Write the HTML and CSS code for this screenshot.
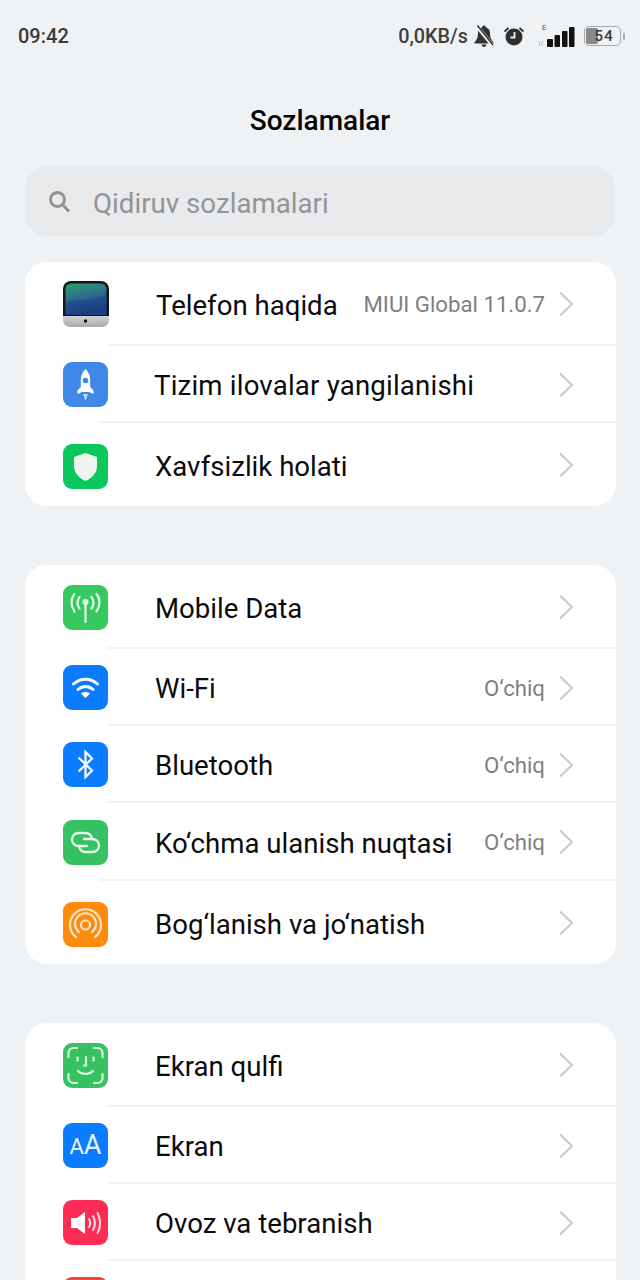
FILE: index.html
```html
<!DOCTYPE html>
<html lang="uz">
<head>
<meta charset="utf-8">
<title>Sozlamalar</title>
<link rel="stylesheet" href="styles.css">
</head>
<body>
<div class="screen">
  <div class="status">
    <span class="time">09:42</span>
    <div class="status-right">
      <span class="speed">0,0KB/s</span>
      <svg class="st-bell" width="22" height="24" viewBox="0 0 22 24"><path d="M11 1.500c1.200 0 1.800.8 1.800 1.800 3 .9 4.200 3.400 4.200 6 0 4 1.200 7 3.500 8.700v1.500h-19V18C3.800 16.300 5 13.300 5 9.300c0-2.600 1.200-5.100 4.200-6C9.200 2.300 9.800 1.500 11 1.500zM8.500 20.500h5c0 1.500-1.200 2.500-2.500 2.500s-2.500-1-2.500-2.500z" fill="#333"/><path d="M3 1 20 22" stroke="#eff2f5" stroke-width="3.600"/><path d="M4.500 1.500 20 21" stroke="#333" stroke-width="1.500"/></svg>
      <svg class="st-alarm" width="22" height="22" viewBox="0 0 22 22"><circle cx="11" cy="12" r="8.500" fill="#2f2f2f"/><path d="M11.500 7V12.500H7.500" fill="none" stroke="#eff2f5" stroke-width="1.800"/><path d="M1.500 6.500 5.500 3M20.500 6.500 16.500 3" stroke="#2f2f2f" stroke-width="1.800"/></svg>
      <svg class="st-signal" width="38" height="26" viewBox="0 0 38 26"><text x="4" y="7.500" class="st-e">E</text><path d="M1 24 2 19M3.500 24l1-5" stroke="#b5b5b5" stroke-width=".9"/><rect x="9" y="17" width="6" height="8" rx="1" fill="#111"/><rect x="16.500" y="13" width="5.500" height="12" rx="1" fill="#111"/><rect x="24" y="9" width="5.500" height="16" rx="1" fill="#111"/><rect x="31" y="5" width="5.500" height="20" rx="1" fill="#111"/></svg>
      <div class="battery">
        <div class="battery-fill"></div>
        <span class="battery-num">54</span>
      </div>
      <span class="battery-tip"></span>
    </div>
  </div>

  <h1 class="title">Sozlamalar</h1>

  <div class="search">
    <svg width="26" height="26" viewBox="0 0 26 26"><circle cx="11.500" cy="11.500" r="7" fill="none" stroke="#8f9193" stroke-width="2.800"/><path d="M16.500 16.500 23 23.500" stroke="#8f9193" stroke-width="3"/></svg>
    <span class="search-text">Qidiruv sozlamalari</span>
  </div>

  <section class="card card-a">
    <div class="row row-first">
      <svg class="ico-mac" width="46" height="46" viewBox="0 0 46 46">
        <defs>
          <linearGradient id="scr" x1="0" y1="0" x2="0.300" y2="1"><stop offset="0" stop-color="#2f9a72"/><stop offset=".4" stop-color="#2b7a85"/><stop offset=".7" stop-color="#2a5596"/><stop offset="1" stop-color="#1a3a78"/></linearGradient>
          <linearGradient id="chin" x1="0" y1="0" x2="0" y2="1"><stop offset="0" stop-color="#dcdcdc"/><stop offset="1" stop-color="#a8a8a8"/></linearGradient>
        </defs>
        <path d="M0 33h46v6a7 7 0 0 1-7 7H7a7 7 0 0 1-7-7z" fill="url(#chin)"/>
        <path d="M8 0h30a8 8 0 0 1 8 8v27H0V8a8 8 0 0 1 8-8z" fill="#14181a"/>
        <path d="M8 2.500h30a5.500 5.500 0 0 1 5.500 5.500v26h-41V8A5.500 5.500 0 0 1 8 2.500z" fill="url(#scr)"/>
        <path d="M2.500 22C14 17 30 21 43.500 13V34h-41z" fill="#1b3f86" opacity=".5"/>
        <circle cx="22.500" cy="40" r="1.700" fill="#111"/>
      </svg>
      <span class="label">Telefon haqida</span>
      <span class="value">MIUI Global 11.0.7</span>
      <svg class="chev" width="16" height="26" viewBox="0 0 16 26"><path d="M2 1.500 14 13 2 24.500"/></svg>
    </div>
    <div class="row row-mid inset-last">
      <svg class="ico" width="45" height="45" viewBox="0 0 45 45"><rect width="45" height="45" rx="9" fill="#3f88e8"/><path d="M22.500 7c3.300 3 4.700 7 4.700 11.500V25l3.300 3.500V32L26 30h-7l-4.500 2v-3.500l3.300-3.500v-6.500C17.800 14 19.200 10 22.500 7z" fill="#fff"/><circle cx="22.500" cy="18.500" r="2.800" fill="#3f88e8"/><path d="M20.200 32h4.600l-2.300 7z" fill="#c5dcf9"/></svg>
      <span class="label label-shift">Tizim ilovalar yangilanishi</span>
      <svg class="chev" width="16" height="26" viewBox="0 0 16 26"><path d="M2 1.500 14 13 2 24.500"/></svg>
    </div>
    <div class="row row-last">
      <svg class="ico" width="45" height="45" viewBox="0 0 45 45"><rect width="45" height="45" rx="9" fill="#09c95e"/><path d="M22.500 9 34 13v9c0 7-5 12-11.500 15C16 34 11 29 11 22v-9z" fill="#eef4f0"/></svg>
      <span class="label">Xavfsizlik holati</span>
      <svg class="chev" width="16" height="26" viewBox="0 0 16 26"><path d="M2 1.500 14 13 2 24.500"/></svg>
    </div>
  </section>

  <section class="card card-b">
    <div class="row row-first">
      <svg class="ico" width="45" height="45" viewBox="0 0 45 45"><rect width="45" height="45" rx="9" fill="#36c95f"/><g fill="none" stroke="#e4f8e9" stroke-width="2.200" stroke-linecap="round"><path d="M22.500 18V37"/><path d="M16.500 12c-2.500 3.500-2.500 8 0 11.500M28.500 12c2.500 3.500 2.500 8 0 11.500M11.500 9c-4 5-4 12 0 17.500M33.500 9c4 5 4 12 0 17.500"/></g><circle cx="22.500" cy="17" r="3" fill="#e4f8e9"/></svg>
      <span class="label">Mobile Data</span>
      <svg class="chev" width="16" height="26" viewBox="0 0 16 26"><path d="M2 1.500 14 13 2 24.500"/></svg>
    </div>
    <div class="row row-mid">
      <svg class="ico" width="45" height="45" viewBox="0 0 45 45"><rect width="45" height="45" rx="9" fill="#0c7cff"/><g fill="none" stroke="#fff" stroke-width="3" stroke-linecap="round"><path d="M10.500 19c7-6.500 17-6.500 24 0"/><path d="M15 24.500c4.500-4 10.500-4 15 0"/></g><path d="M22.500 33 18 28.500c2.500-2 6.500-2 9 0z" fill="#fff"/></svg>
      <span class="label">Wi-Fi</span>
      <span class="value">O‘chiq</span>
      <svg class="chev" width="16" height="26" viewBox="0 0 16 26"><path d="M2 1.500 14 13 2 24.500"/></svg>
    </div>
    <div class="row row-mid">
      <svg class="ico" width="45" height="45" viewBox="0 0 45 45"><rect width="45" height="45" rx="9" fill="#0c7cff"/><path d="M15.500 15.500 29 28.500l-6.500 6.500V10l6.500 6.500L15.500 29.500" fill="none" stroke="#f2f7ff" stroke-width="2.300"/></svg>
      <span class="label">Bluetooth</span>
      <span class="value">O‘chiq</span>
      <svg class="chev" width="16" height="26" viewBox="0 0 16 26"><path d="M2 1.500 14 13 2 24.500"/></svg>
    </div>
    <div class="row row-mid row-78 inset-last">
      <svg class="ico" width="45" height="45" viewBox="0 0 45 45"><rect width="45" height="45" rx="9" fill="#36c162"/><g fill="none" stroke="#e4f8e9" stroke-width="2.400" stroke-linecap="round"><path d="M24 26H15.500a6.500 6.500 0 0 1 0-13h7a6.500 6.500 0 0 1 6.500 6"/><path d="M21 19h8.500a6.500 6.500 0 0 1 0 13h-7a6.500 6.500 0 0 1-6.500-6"/></g></svg>
      <span class="label">Ko‘chma ulanish nuqtasi</span>
      <span class="value">O‘chiq</span>
      <svg class="chev" width="16" height="26" viewBox="0 0 16 26"><path d="M2 1.500 14 13 2 24.500"/></svg>
    </div>
    <div class="row row-last">
      <svg class="ico" width="45" height="45" viewBox="0 0 45 45"><rect width="45" height="45" rx="9" fill="#ff8a0c"/><g fill="none" stroke="#fbe6cc" stroke-width="2.200" stroke-linecap="round"><path d="M13 35a15.500 15.500 0 1 1 19 0"/><path d="M16 30a10.500 10.500 0 1 1 13 0"/><circle cx="22.500" cy="23" r="4.500"/></g></svg>
      <span class="label">Bog‘lanish va jo‘natish</span>
      <svg class="chev" width="16" height="26" viewBox="0 0 16 26"><path d="M2 1.500 14 13 2 24.500"/></svg>
    </div>
  </section>

  <section class="card card-c">
    <div class="row row-first">
      <svg class="ico" width="45" height="45" viewBox="0 0 45 45"><rect width="45" height="45" rx="9" fill="#36c162"/><g fill="none" stroke="#dff6e5" stroke-width="2.200" stroke-linecap="round"><path d="M5.500 14V10a5 5 0 0 1 5-5H14M31 5h3.500a5 5 0 0 1 5 5v4M5.500 31v4a5 5 0 0 0 5 5H14M31 40h3.500a5 5 0 0 0 5-5v-4"/><path d="M14.500 14.500v3M30.500 14.500v3M23 14v8.500h-2M15 28c4 4 11 4 15 0"/></g></svg>
      <span class="label">Ekran qulfi</span>
      <svg class="chev" width="16" height="26" viewBox="0 0 16 26"><path d="M2 1.500 14 13 2 24.500"/></svg>
    </div>
    <div class="row row-mid">
      <div class="ico-aa"><span class="aa-small">A</span><span class="aa-big">A</span></div>
      <span class="label">Ekran</span>
      <svg class="chev" width="16" height="26" viewBox="0 0 16 26"><path d="M2 1.500 14 13 2 24.500"/></svg>
    </div>
    <div class="row row-mid">
      <svg class="ico" width="45" height="45" viewBox="0 0 45 45"><rect width="45" height="45" rx="9" fill="#ff2d55"/><path d="M8 18h6l8-6v22l-8-6H8z" fill="#fff"/><g fill="none" stroke="#ffe0e6" stroke-width="2" stroke-linecap="round"><path d="M26 19c1.500 2.500 1.500 5.500 0 8M30 16c2.500 4 2.500 10 0 14M34.500 13c3.500 6 3.500 14 0 20"/></g></svg>
      <span class="label">Ovoz va tebranish</span>
      <svg class="chev" width="16" height="26" viewBox="0 0 16 26"><path d="M2 1.500 14 13 2 24.500"/></svg>
    </div>
    <div class="row row-mid">
      <svg class="ico" width="45" height="45" viewBox="0 0 45 45"><rect width="45" height="45" rx="9" fill="#f0453a"/></svg>
    </div>
  </section>
</div>
</body>
</html>
```
FILE: styles.css
```css
* { box-sizing: border-box; }
html, body { margin: 0; padding: 0; }
body { background: #eff2f5; font-family: Roboto, "Noto Sans", sans-serif; }
.screen { width: 640px; height: 1280px; overflow: hidden; background: #eff2f5; display: flex; flex-direction: column; }

.status { height: 72px; flex: none; display: flex; align-items: center; justify-content: space-between; padding: 0 15px 0 18px; }
.time { font-size: 20px; font-weight: 500; color: #3a3a3a; }
.status-right { display: flex; align-items: center; }
.speed { font-size: 19.800px; font-weight: 500; color: #3f3f3f; margin-right: 5px; }
.st-bell { margin-right: 8px; }
.st-alarm { margin-right: 13px; }
.st-signal { margin-right: 8px; margin-top: -2px; }
.st-e { font-size: 8px; fill: #555; font-family: Roboto, sans-serif; }
.battery { position: relative; width: 37px; height: 20px; border: 1.500px solid #a9a9a9; border-radius: 5px; overflow: hidden; display: flex; align-items: center; justify-content: center; }
.battery-fill { position: absolute; left: 1px; top: 1px; bottom: 1px; width: 12px; background: #8a8a8a; border-radius: 2px; }
.battery-num { position: relative; font-size: 15.500px; font-weight: 500; color: #3a3a3a; letter-spacing: 1px; margin-left: 3px; }
.battery-tip { width: 2px; height: 7px; background: #a9a9a9; margin-left: 2px; border-radius: 1px; }

.title { margin: 0; height: 94px; flex: none; display: flex; align-items: center; justify-content: center; font-size: 28px; font-weight: 500; color: #050505; padding-top: 2px; }

.search { flex: none; margin: 0 25px; height: 70px; border-radius: 22px; background: #e8eaec; display: flex; align-items: center; padding-left: 21px; gap: 21px; }
.search-text { font-size: 27.700px; color: #929496; margin-top: 4px; }

.card { flex: none; margin-left: 25px; margin-right: 24px; background: #fff; border-radius: 22px; overflow: hidden; }
.card-a { margin-top: 26px; }
.card-b { margin-top: 59px; }
.card-c { margin-top: 59px; height: 300px; }

.row { display: flex; align-items: center; padding: 0 42px 0 38px; position: relative; }
.row-first { height: 84px; }
.row-mid { height: 77px; }
.row-78 { height: 78px; }
.row-last { height: 83px; }
.row-first::after, .row-mid::after { content: ""; position: absolute; left: 83px; right: 0; bottom: 0; height: 2px; background: #f1f2f3; }
.inset-last::after { left: 75px; }

.ico, .ico-mac { flex: none; width: 45px; height: 45px; }
.ico-mac { width: 46px; height: 46px; }
.row-last .ico { margin-top: 3px; }
.ico-aa { flex: none; width: 45px; height: 45px; border-radius: 9px; background: #0c7cff; color: #eaf3ff; display: flex; align-items: baseline; justify-content: center; padding-top: 6px; font-weight: 400; }
.aa-small { font-size: 22px; }
.aa-big { font-size: 27px; }

.label { margin-left: 47px; font-size: 27.600px; color: #0b0b0b; white-space: nowrap; }
.label-shift { margin-left: 46px; letter-spacing: .2px; }
.row-first .label { margin-top: 2px; }
.row-mid .label { margin-top: 2px; }
.row-last .label { margin-top: 4px; }
.value { margin-left: auto; font-size: 22.200px; color: #7f7f7f; white-space: nowrap; }
.chev { flex: none; margin-left: auto; }
.value + .chev { margin-left: 13px; }
.chev path { fill: none; stroke: #c9c9c9; stroke-width: 2; }
```
